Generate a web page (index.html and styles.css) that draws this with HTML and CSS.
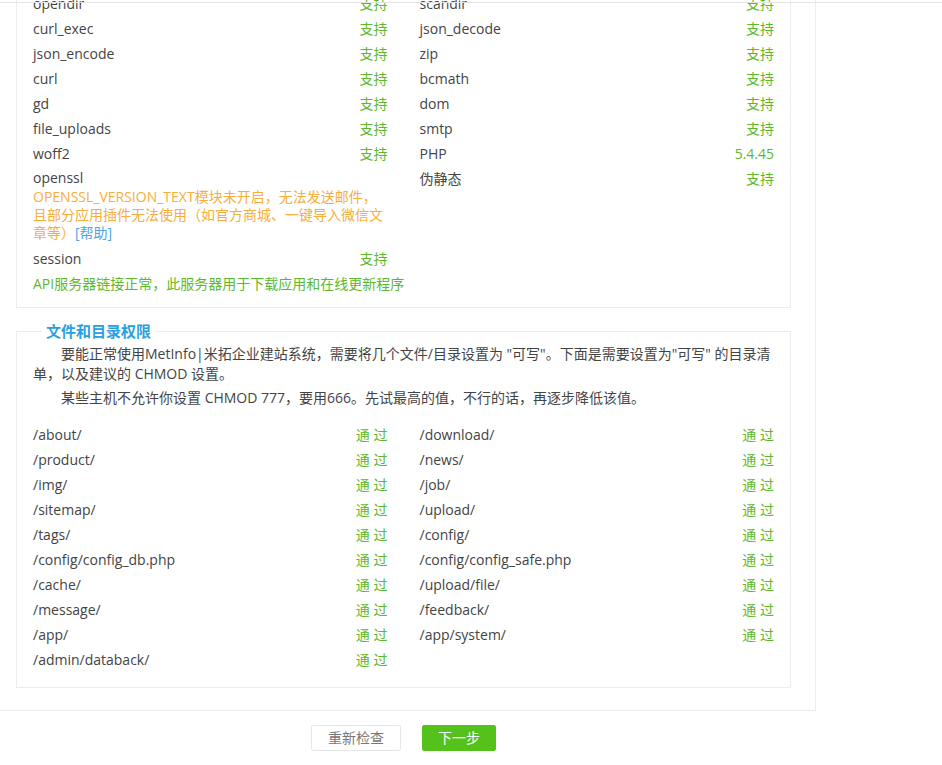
FILE: index.html
```html
<!DOCTYPE html>
<html lang="zh-CN">
<head>
<meta charset="utf-8">
<title>MetInfo 安装 - 环境检测</title>
<link rel="stylesheet" href="styles.css">
</head>
<body>
<div class="topline"></div>
<div class="page">
  <div class="panel">
    <div class="box env">
      <div class="item"><span class="name">opendir</span><span class="ok">支持</span></div>
      <div class="item"><span class="name">scandir</span><span class="ok">支持</span></div>
      <div class="item"><span class="name">curl_exec</span><span class="ok">支持</span></div>
      <div class="item"><span class="name">json_decode</span><span class="ok">支持</span></div>
      <div class="item"><span class="name">json_encode</span><span class="ok">支持</span></div>
      <div class="item"><span class="name">zip</span><span class="ok">支持</span></div>
      <div class="item"><span class="name">curl</span><span class="ok">支持</span></div>
      <div class="item"><span class="name">bcmath</span><span class="ok">支持</span></div>
      <div class="item"><span class="name">gd</span><span class="ok">支持</span></div>
      <div class="item"><span class="name">dom</span><span class="ok">支持</span></div>
      <div class="item"><span class="name">file_uploads</span><span class="ok">支持</span></div>
      <div class="item"><span class="name">smtp</span><span class="ok">支持</span></div>
      <div class="item"><span class="name">woff2</span><span class="ok">支持</span></div>
      <div class="item"><span class="name">PHP</span><span class="ok">5.4.45</span></div>
      <div class="item item-warn">
        <div class="name warn-name">openssl</div>
        <div class="warn">OPENSSL_VERSION_TEXT模块未开启，无法发送邮件，且部分应用插件无法使用（如官方商城、一键导入微信文章等）<a class="help" href="#">[帮助]</a></div>
      </div>
      <div class="item"><span class="name">伪静态</span><span class="ok">支持</span></div>
      <div class="item"><span class="name">session</span><span class="ok">支持</span></div>
      <div class="item"></div>
      <div class="api">API服务器链接正常，此服务器用于下载应用和在线更新程序</div>
    </div>

    <fieldset class="box perm">
      <legend class="legend">文件和目录权限</legend>
      <p class="intro">要能正常使用MetInfo|米拓企业建站系统，需要将几个文件/目录设置为 "可写"。下面是需要设置为"可写" 的目录清单，以及建议的 CHMOD 设置。</p>
      <p class="intro">某些主机不允许你设置 CHMOD 777，要用666。先试最高的值，不行的话，再逐步降低该值。</p>
      <div class="dirs">
        <div class="item"><span class="name">/about/</span><span class="ok">通 过</span></div>
        <div class="item"><span class="name">/download/</span><span class="ok">通 过</span></div>
        <div class="item"><span class="name">/product/</span><span class="ok">通 过</span></div>
        <div class="item"><span class="name">/news/</span><span class="ok">通 过</span></div>
        <div class="item"><span class="name">/img/</span><span class="ok">通 过</span></div>
        <div class="item"><span class="name">/job/</span><span class="ok">通 过</span></div>
        <div class="item"><span class="name">/sitemap/</span><span class="ok">通 过</span></div>
        <div class="item"><span class="name">/upload/</span><span class="ok">通 过</span></div>
        <div class="item"><span class="name">/tags/</span><span class="ok">通 过</span></div>
        <div class="item"><span class="name">/config/</span><span class="ok">通 过</span></div>
        <div class="item"><span class="name">/config/config_db.php</span><span class="ok">通 过</span></div>
        <div class="item"><span class="name">/config/config_safe.php</span><span class="ok">通 过</span></div>
        <div class="item"><span class="name">/cache/</span><span class="ok">通 过</span></div>
        <div class="item"><span class="name">/upload/file/</span><span class="ok">通 过</span></div>
        <div class="item"><span class="name">/message/</span><span class="ok">通 过</span></div>
        <div class="item"><span class="name">/feedback/</span><span class="ok">通 过</span></div>
        <div class="item"><span class="name">/app/</span><span class="ok">通 过</span></div>
        <div class="item"><span class="name">/app/system/</span><span class="ok">通 过</span></div>
        <div class="item"><span class="name">/admin/databack/</span><span class="ok">通 过</span></div>
      </div>
    </fieldset>
  </div>

  <div class="actions">
    <a class="btn btn-default" href="#">重新检查</a>
    <a class="btn btn-primary" href="#">下一步</a>
  </div>
</div>
</body>
</html>
```

FILE: styles.css
```css
html, body {
  margin: 0;
  padding: 0;
  background: #fff;
}

body {
  font-family: "Open Sans", "Noto Sans CJK SC", sans-serif;
  font-size: 14px;
  color: #444;
  overflow: hidden;
}

.topline {
  position: fixed;
  top: 2px;
  left: 0;
  right: 0;
  height: 1px;
  background: #e4e4e4;
  z-index: 5;
}

.page {
  width: 816px;
  margin-top: -40px;
}

.panel {
  box-sizing: border-box;
  width: 816px;
  border-right: 1px solid #ececec;
  border-bottom: 1px solid #ececec;
  padding: 0 24px 22px 16px;
}

.box {
  box-sizing: border-box;
  width: 775px;
  border: 1px solid #ececec;
  margin: 0;
}

.env {
  display: grid;
  grid-template-columns: 1fr 1fr;
  padding: 30px 0 11px;
}

.item {
  display: flex;
  justify-content: space-between;
  align-items: flex-start;
  padding: 0 16px;
  line-height: 25px;
  min-height: 25px;
}

.name {
  color: #444;
}

.ok {
  color: #5cb92c;
}

.item-warn {
  display: block;
  padding-bottom: 4px;
}

.warn-name {
  line-height: 20px;
  padding-top: 2px;
}

.warn {
  color: #f8ad3c;
  line-height: 18px;
  width: 350px;
}

.help {
  color: #4ba6e0;
  text-decoration: none;
}

.api {
  grid-column: 1 / span 2;
  padding: 0 16px;
  line-height: 25px;
  color: #5cb92c;
}

.perm {
  margin-top: 13px;
  padding: 3px 16px 15px;
  min-width: 0;
}

.legend {
  margin-left: 9px;
  padding: 0 4px;
  line-height: 20px;
  font-size: 15px;
  font-weight: bold;
  color: #2aa0de;
}

.intro {
  margin: 0 0 4px;
  line-height: 20px;
  text-indent: 2em;
  font-size: 14px;
  color: #444;
}

.dirs {
  display: grid;
  grid-template-columns: 1fr 1fr;
  margin: 14px -16px 0;
}

.actions {
  display: flex;
  justify-content: center;
  gap: 21px;
  padding: 14px 9px 0 0;
}

.btn {
  display: block;
  box-sizing: border-box;
  height: 26px;
  line-height: 24px;
  padding: 0 16px;
  border: 1px solid #e6e6e6;
  border-radius: 2px;
  font-size: 14px;
  text-decoration: none;
}

.btn-default {
  color: #777;
  background: #fff;
}

.btn-primary {
  padding: 0 15px;
  color: #fff;
  background: #55c21c;
  border-color: #55c21c;
}
```
